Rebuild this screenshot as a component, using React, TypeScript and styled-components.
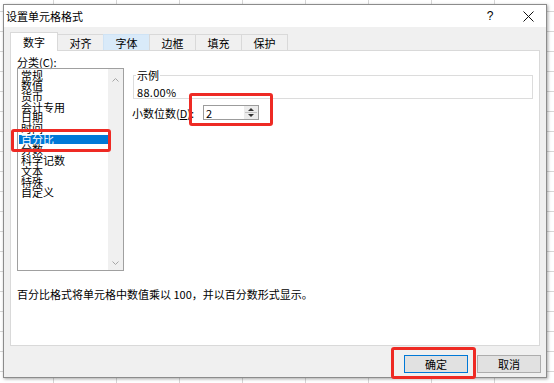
import React from "react";
import styled, { createGlobalStyle } from "styled-components";

const GlobalStyle = createGlobalStyle`
  html, body { margin: 0; padding: 0; background: #fff; }
  body { font-family: "Noto Sans CJK SC", "Noto Sans", sans-serif; color: #000; }
  * { box-sizing: border-box; }
`;

const Desktop = styled.div`
  width: 554px;
  height: 383px;
  overflow: hidden;
  padding: 4px 0 0 3px;
  background-color: #fff;
  background-image:
    linear-gradient(to right, #d6d6d6 1px, transparent 1px),
    linear-gradient(to bottom, #d6d6d6 1px, transparent 1px);
  background-size: 63px 20px;
  background-position: 53px 0, 0 11px;
`;

const Dialog = styled.div`
  width: 544px;
  height: 374px;
  border: 1px solid #8c8c8c;
  box-shadow: 1px 1px 3px rgba(0, 0, 0, 0.35);
  display: flex;
  flex-direction: column;
  background: #f0f0f0;
`;

const TitleBar = styled.div`
  height: 22px;
  flex: none;
  background: #fff;
  display: flex;
  align-items: center;
  padding: 0 1px 0 2px;
  gap: 4px;
`;

const Title = styled.span`
  flex: 1;
  font-size: 11px;
  line-height: 12px;
  white-space: nowrap;
`;

const CaptionButton = styled.div`
  width: 34px;
  height: 22px;
  display: flex;
  align-items: center;
  justify-content: center;
  font-family: "Liberation Sans", sans-serif;
  font-size: 12px;
`;

const Body = styled.div`
  flex: 1;
  display: flex;
  flex-direction: column;
  padding: 5px 6px 4px 6px;
`;

const TabStrip = styled.div`
  display: flex;
  align-items: flex-end;
  height: 18px;
  flex: none;
  position: relative;
  z-index: 1;
`;

const Tab = styled.div<{ $active?: boolean; $hover?: boolean }>`
  position: relative;
  z-index: ${(p) => (p.$active ? 2 : 1)};
  width: ${(p) => (p.$active ? 48 : 47)}px;
  margin-left: ${(p) => (p.$active ? 0 : -1)}px;
  height: ${(p) => (p.$active ? 19 : 16)}px;
  margin-bottom: ${(p) => (p.$active ? -1 : 0)}px;
  border: 1px solid ${(p) => (p.$hover ? "#cfe3f5" : "#d9d9d9")};
  border-bottom: none;
  background: ${(p) => (p.$active ? "#fff" : p.$hover ? "#d9eaf9" : "#f0f0f0")};
  display: flex;
  align-items: center;
  justify-content: center;
  font-size: 11px;
  line-height: 12px;
`;

const Panel = styled.div`
  height: 296px;
  flex: none;
  background: #fff;
  border: 1px solid #d9d9d9;
  padding: 6px 6px 0 6px;
  display: flex;
  flex-direction: column;
`;

const Columns = styled.div`
  display: flex;
  gap: 8px;
`;

const LeftCol = styled.div`
  width: 107px;
  display: flex;
  flex-direction: column;
`;

const RightCol = styled.div`
  flex: 1;
  display: flex;
  flex-direction: column;
`;

const FieldLabel = styled.div`
  font-size: 11px;
  line-height: 11px;
  height: 11px;
  white-space: nowrap;
`;

const ListBox = styled.div`
  position: relative;
  height: 203px;
  border: 1px solid #a0a0a0;
  display: flex;
`;

const Items = styled.div`
  flex: 1;
  padding: 0.65px 0 0 1px;
`;

const Item = styled.div<{ $selected?: boolean }>`
  height: 10.7px;
  line-height: 10.7px;
  font-size: 11px;
  padding-left: 2px;
  white-space: nowrap;
  color: ${(p) => (p.$selected ? "#fff" : "#000")};
  background: ${(p) =>
    p.$selected
      ? "linear-gradient(to bottom, transparent 1px, #0078d7 1px, #0078d7 9.6px, transparent 9.6px)"
      : "transparent"};
`;

const ScrollBar = styled.div`
  width: 15px;
  background: #f0f0f0;
  display: flex;
  flex-direction: column;
  justify-content: space-between;
`;

const ScrollButton = styled.div<{ $h: number }>`
  height: ${(p) => p.$h}px;
  display: flex;
  align-items: center;
  justify-content: center;
`;

const Annotation = styled.div<{ $l: number; $t: number; $w: number; $h: number }>`
  position: absolute;
  left: ${(p) => p.$l}px;
  top: ${(p) => p.$t}px;
  width: ${(p) => p.$w}px;
  height: ${(p) => p.$h}px;
  border: 3px solid #ee2a24;
  border-radius: 3px;
  pointer-events: none;
  z-index: 5;
`;

const SampleGroup = styled.div`
  position: relative;
  margin: 18px 0 0 1px;
  height: 24px;
  border: 1px solid #dcdcdc;
  padding: 10px 0 0 3px;
`;

const SampleLegend = styled.span`
  position: absolute;
  top: -7px;
  left: 2px;
  padding: 0 1px;
  background: #fff;
  font-size: 11px;
  line-height: 12px;
`;

const SampleValue = styled.div`
  font-size: 11px;
  line-height: 12px;
  letter-spacing: 0.3px;
`;

const DecimalRow = styled.div`
  display: flex;
  align-items: center;
  margin-top: 6px;
  height: 15px;
`;

const DecimalLabel = styled.div`
  width: 71px;
  font-size: 11px;
  line-height: 12px;
  white-space: nowrap;
`;

const Spinner = styled.div`
  position: relative;
  width: 56px;
  height: 15px;
  border: 1px solid #9c9c9c;
  display: flex;
  align-items: center;
  background: #fff;
`;

const SpinValue = styled.span`
  flex: 1;
  padding-left: 2px;
  font-size: 11px;
  line-height: 12px;
`;

const SpinButtons = styled.div`
  width: 14px;
  height: 13px;
  background: #ececec;
  display: flex;
  align-items: center;
  justify-content: center;
`;

const Description = styled.div`
  margin-top: 17px;
  font-size: 11px;
  line-height: 12px;
  white-space: nowrap;
`;

const Footer = styled.div`
  display: flex;
  justify-content: flex-end;
  gap: 9px;
  padding-top: 9px;
  margin-right: -1px;
`;

const Button = styled.div<{ $default?: boolean }>`
  position: relative;
  width: 64px;
  height: 18px;
  border: 1px solid ${(p) => (p.$default ? "#0078d7" : "#adadad")};
  background: #e1e1e1;
  display: flex;
  align-items: center;
  justify-content: center;
  font-size: 11px;
  line-height: 12px;
`;

const categories = [
  "常规",
  "数值",
  "货币",
  "会计专用",
  "日期",
  "时间",
  "百分比",
  "分数",
  "科学记数",
  "文本",
  "特殊",
  "自定义",
];

const tabs = ["数字", "对齐", "字体", "边框", "填充", "保护"];

export default function App() {
  return (
    <>
      <GlobalStyle />
      <Desktop>
        <Dialog>
          <TitleBar>
            <Title>设置单元格格式</Title>
            <CaptionButton>?</CaptionButton>
            <CaptionButton>
              <svg width="11" height="11" viewBox="0 0 11 11">
                <path d="M0.5 0.5 L10.5 10.5 M10.5 0.5 L0.5 10.5" stroke="#111" strokeWidth="1" />
              </svg>
            </CaptionButton>
          </TitleBar>
          <Body>
            <TabStrip>
              {tabs.map((t, i) => (
                <Tab key={t} $active={i === 0} $hover={i === 2}>
                  {t}
                </Tab>
              ))}
            </TabStrip>
            <Panel>
              <Columns>
                <LeftCol>
                  <FieldLabel>
                    分类(<u>C</u>):
                  </FieldLabel>
                  <ListBox>
                    <Items>
                      {categories.map((c) => (
                        <Item key={c} $selected={c === "百分比"}>
                          {c}
                        </Item>
                      ))}
                    </Items>
                    <ScrollBar>
                      <ScrollButton $h={21}>
                        <svg width="7" height="4" viewBox="0 0 7 4">
                          <path d="M0.5 3.5 L3.5 0.5 L6.5 3.5" stroke="#a6a6a6" fill="none" />
                        </svg>
                      </ScrollButton>
                      <ScrollButton $h={14}>
                        <svg width="7" height="4" viewBox="0 0 7 4">
                          <path d="M0.5 0.5 L3.5 3.5 L6.5 0.5" stroke="#a6a6a6" fill="none" />
                        </svg>
                      </ScrollButton>
                    </ScrollBar>
                    <Annotation $l={-7} $t={60} $w={100} $h={23} />
                  </ListBox>
                </LeftCol>
                <RightCol>
                  <SampleGroup>
                    <SampleLegend>示例</SampleLegend>
                    <SampleValue>88.00%</SampleValue>
                  </SampleGroup>
                  <DecimalRow>
                    <DecimalLabel>
                      小数位数(<u>D</u>):
                    </DecimalLabel>
                    <Spinner>
                      <SpinValue>2</SpinValue>
                      <SpinButtons>
                        <svg width="14" height="13" viewBox="0 0 14 13">
                          <path d="M4 5 L7 2 L10 5 Z" fill="#333" />
                          <line x1="1" y1="6.5" x2="13" y2="6.5" stroke="#c4c4c4" />
                          <path d="M4 8 L7 11 L10 8 Z" fill="#333" />
                        </svg>
                      </SpinButtons>
                      <Annotation $l={-15} $t={-13} $w={84} $h={33} />
                    </Spinner>
                  </DecimalRow>
                </RightCol>
              </Columns>
              <Description>百分比格式将单元格中数值乘以 100，并以百分数形式显示。</Description>
            </Panel>
            <Footer>
              <Button $default>
                确定
                <Annotation $l={-14} $t={-9} $w={85} $h={32} />
              </Button>
              <Button>取消</Button>
            </Footer>
          </Body>
        </Dialog>
      </Desktop>
    </>
  );
}
